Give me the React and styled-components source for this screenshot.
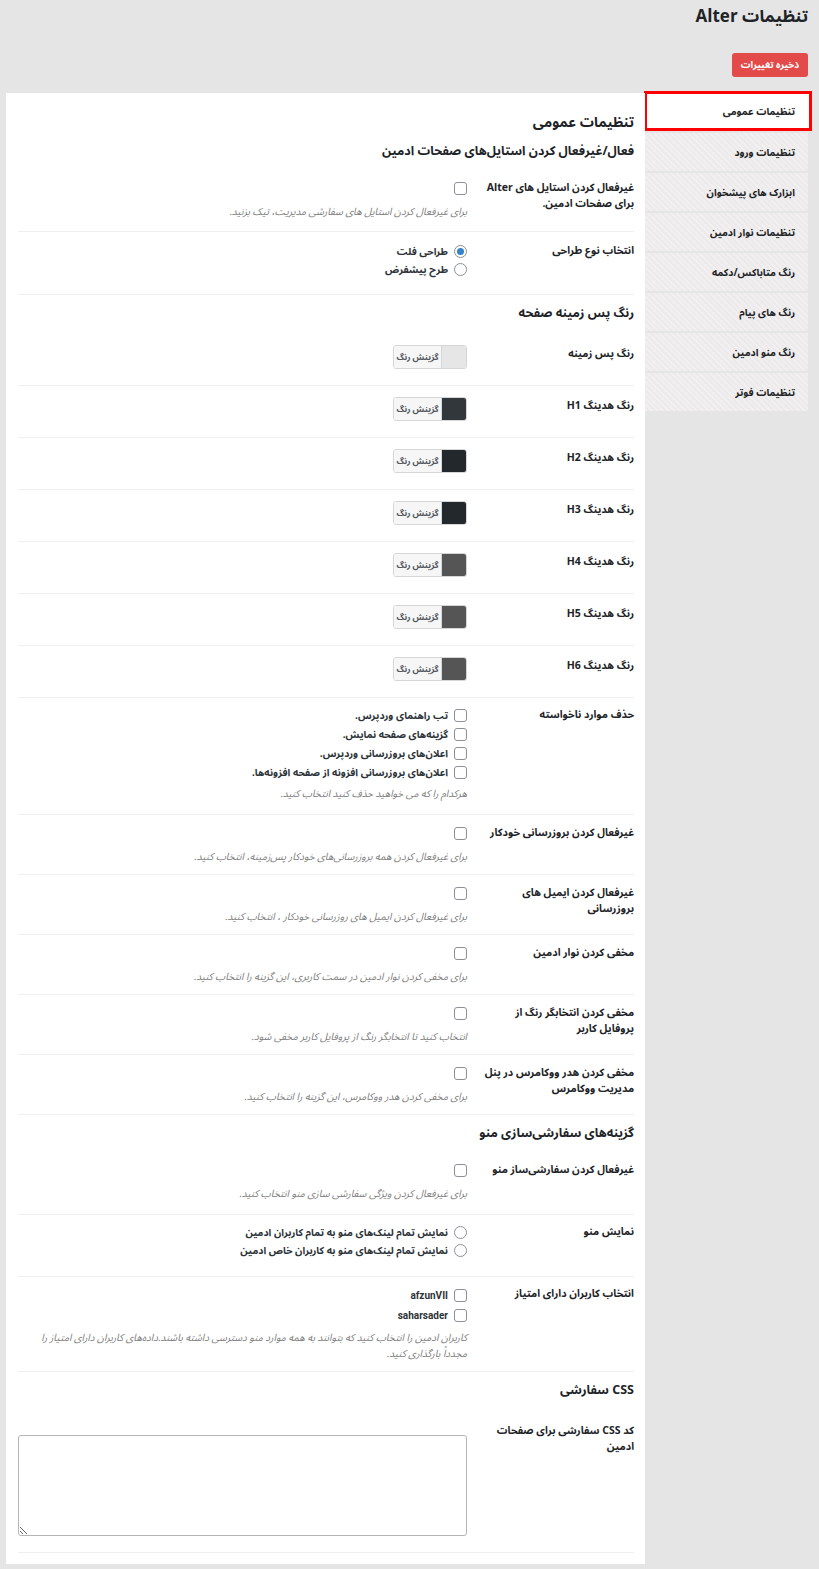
import styled, { createGlobalStyle } from "styled-components";

const GlobalStyle = createGlobalStyle`
  html, body {
    margin: 0;
    padding: 0;
    background: #e5e5e5;
  }
  body {
    font-family: "Noto Sans Arabic", "DejaVu Sans", "Noto Sans", sans-serif;
    color: #1d2327;
  }
`;

const Page = styled.div`
  direction: rtl;
  padding: 0 11px 6px 6px;
  min-height: 1569px;
  box-sizing: border-box;
`;

const PageTitle = styled.h1`
  margin: 0;
  padding: 6px 0 0;
  font-size: 17px;
  font-weight: 700;
  line-height: 22px;
  color: #1d2327;
`;

const Toolbar = styled.div`
  display: flex;
  padding: 25px 0 16px;
`;

const SaveButton = styled.button`
  font-family: inherit;
  background: #e34b4b;
  color: #fff;
  border: 0;
  border-radius: 3px;
  height: 24px;
  padding: 0 7px;
  font-size: 9.5px;
  font-weight: 700;
  white-space: nowrap;
  min-width: 76px;
`;

const Layout = styled.div`
  display: flex;
  align-items: flex-start;
`;

const Sidebar = styled.nav`
  width: 163px;
  flex-shrink: 0;
  display: flex;
  flex-direction: column;
  gap: 2px;
  margin-top: -2px;
`;

const TabItem = styled.div`
  height: 38px;
  display: flex;
  align-items: center;
  padding: 0 13px;
  font-size: 10px;
  font-weight: 700;
  color: #1d2327;
  box-sizing: border-box;
  white-space: nowrap;
  background: ${(p) =>
    p.$active
      ? "#fff"
      : "repeating-linear-gradient(45deg, #f1efef 0 2px, #eceaea 2px 4px)"};
  ${(p) =>
    p.$active &&
    `
    border: 3px solid #f00;
    margin: 0 -4px 0 -1px;
    height: 40px;
    padding-right: 14px;
  `}
`;

const Panel = styled.main`
  flex: 1;
  background: #fff;
  padding: 19px 11px 11px 12px;
`;

const PanelTitle = styled.h2`
  margin: 0;
  font-size: 14px;
  font-weight: 700;
  line-height: 22px;
`;

const SubTitle = styled.h3`
  margin: 7px 0 0;
  font-size: 12.5px;
  font-weight: 700;
  line-height: 20px;
`;

const SectionTitle = styled.h3`
  margin: 0;
  padding: 8px 0 12px;
  font-size: 12.5px;
  font-weight: 700;
  line-height: 20px;
`;

const Row = styled.div`
  display: grid;
  grid-template-columns: 148px 1fr;
  column-gap: 19px;
  padding: ${(p) => p.$pad || "9px 0 9px"};
  border-bottom: 1px solid #efefef;
  ${(p) => p.$first && "margin-top: 9px;"}
`;

const Label = styled.div`
  font-size: 10.5px;
  font-weight: 700;
  line-height: 16px;
  padding-top: 1px;
  white-space: nowrap;
`;

const Field = styled.div`
  display: flex;
  flex-direction: column;
  align-items: flex-start;
  min-width: 0;
`;

const Option = styled.label`
  display: flex;
  align-items: center;
  gap: 6px;
  height: ${(p) => p.$h || 18}px;
  font-size: 10px;
  font-weight: 700;
  color: #2c3338;
  font-family: ${(p) =>
    p.$latin ? '"Roboto", "DejaVu Sans", sans-serif' : "inherit"};
`;

const Box = styled.span`
  width: 11px;
  height: 11px;
  border: 1px solid #8c8f94;
  border-radius: 3px;
  background: #fff;
  flex-shrink: 0;
`;

const Radio = styled.span`
  width: 11px;
  height: 11px;
  border: 1px solid #8c8f94;
  border-radius: 50%;
  background: #fff;
  flex-shrink: 0;
  display: flex;
  align-items: center;
  justify-content: center;

  &::after {
    content: "";
    width: 7px;
    height: 7px;
    border-radius: 50%;
    background: ${(p) => (p.$checked ? "#3582c4" : "transparent")};
  }
`;

const Hint = styled.p`
  margin: ${(p) => p.$gap || 7}px 0 0;
  font-size: 10px;
  font-style: italic;
  line-height: 16px;
  color: #7d7d7d;
`;

const Picker = styled.div`
  display: flex;
  height: 24px;
  border: 1px solid #d6d6d6;
  border-radius: 3px;
  overflow: hidden;
  box-sizing: border-box;
  width: 74px;
`;

const Swatch = styled.span`
  width: 24px;
  background: ${(p) => p.$color};
`;

const PickerText = styled.span`
  flex: 1;
  background: #f7f6f6;
  border-right: 1px solid #d6d6d6;
  font-size: 8.5px;
  font-weight: 700;
  color: #50575e;
  display: flex;
  align-items: center;
  justify-content: center;
`;

const CodeArea = styled.textarea`
  width: 100%;
  height: 101px;
  box-sizing: border-box;
  border: 1px solid #b5b5b5;
  border-radius: 3px;
  margin-top: 13px;
  resize: vertical;
`;

const tabs = [
  "تنظیمات عمومی",
  "تنظیمات ورود",
  "ابزارک های پیشخوان",
  "تنظیمات نوار ادمین",
  "رنگ متاباکس/دکمه",
  "رنگ های پیام",
  "رنگ منو ادمین",
  "تنظیمات فوتر",
];

const colors = [
  ["رنگ پس زمینه", "#e6e6e6"],
  ["رنگ هدینگ H1", "#32373c"],
  ["رنگ هدینگ H2", "#23282d"],
  ["رنگ هدینگ H3", "#23282d"],
  ["رنگ هدینگ H4", "#555555"],
  ["رنگ هدینگ H5", "#555555"],
  ["رنگ هدینگ H6", "#555555"],
];

const removals = [
  "تب راهنمای وردپرس.",
  "گزینه‌های صفحه نمایش.",
  "اعلان‌های بروزرسانی وردپرس.",
  "اعلان‌های بروزرسانی افزونه از صفحه افزونه‌ها.",
];

const toggles = [
  [
    "غیرفعال کردن بروزرسانی خودکار",
    "برای غیرفعال کردن همه بروزرسانی‌های خودکار پس‌زمینه، انتخاب کنید.",
  ],
  [
    <>
      غیرفعال کردن ایمیل های
      <br />
      بروزرسانی
    </>,
    "برای غیرفعال کردن ایمیل های روزرسانی خودکار ، انتخاب کنید.",
  ],
  [
    "مخفی کردن نوار ادمین",
    "برای مخفی کردن نوار ادمین در سمت کاربری، این گزینه را انتخاب کنید.",
  ],
  [
    <>
      مخفی کردن انتخابگر رنگ از
      <br />
      پروفایل کاربر
    </>,
    "انتخاب کنید تا انتخابگر رنگ از پروفایل کاربر مخفی شود.",
  ],
  [
    <>
      مخفی کردن هدر ووکامرس در پنل
      <br />
      مدیریت ووکامرس
    </>,
    "برای مخفی کردن هدر ووکامرس، این گزینه را انتخاب کنید.",
  ],
];

function CheckRow({ label, hint, first, pad }) {
  return (
    <Row $first={first} $pad={pad}>
      <Label>{label}</Label>
      <Field>
        <Option>
          <Box />
        </Option>
        <Hint>{hint}</Hint>
      </Field>
    </Row>
  );
}

export default function App() {
  return (
    <Page>
      <GlobalStyle />
      <PageTitle>تنظیمات Alter</PageTitle>
      <Toolbar>
        <SaveButton>ذخیره تغییرات</SaveButton>
      </Toolbar>
      <Layout>
        <Sidebar>
          {tabs.map((t, i) => (
            <TabItem key={t} $active={i === 0}>
              {t}
            </TabItem>
          ))}
        </Sidebar>
        <Panel>
          <PanelTitle>تنظیمات عمومی</PanelTitle>
          <SubTitle>فعال/غیرفعال کردن استایل‌های صفحات ادمین</SubTitle>

          <CheckRow
            first
            pad="9px 0 11px"
            label={
              <>
                غیرفعال کردن استایل های Alter
                <br />
                برای صفحات ادمین.
              </>
            }
            hint="برای غیرفعال کردن استایل های سفارشی مدیریت، تیک بزنید."
          />

          <Row $pad="10px 0 16px">
            <Label>انتخاب نوع طراحی</Label>
            <Field>
              <Option>
                <Radio $checked />
                طراحی فلت
              </Option>
              <Option>
                <Radio />
                طرح پیشفرض
              </Option>
            </Field>
          </Row>

          <SectionTitle>رنگ پس زمینه صفحه</SectionTitle>
          {colors.map(([label, color], i) => (
            <Row key={label} $pad={i === 0 ? "10px 0 16px" : "11px 0 16px"}>
              <Label>{label}</Label>
              <Field>
                <Picker>
                  <Swatch $color={color} />
                  <PickerText>گزینش رنگ</PickerText>
                </Picker>
              </Field>
            </Row>
          ))}

          <Row $pad="8px 0 12px">
            <Label>حذف موارد ناخواسته</Label>
            <Field>
              {removals.map((r) => (
                <Option key={r} $h={19}>
                  <Box />
                  {r}
                </Option>
              ))}
              <Hint $gap={4}>هرکدام را که می خواهید حذف کنید انتخاب کنید.</Hint>
            </Field>
          </Row>

          {toggles.map(([label, hint], i) => (
            <CheckRow key={i} label={label} hint={hint} />
          ))}

          <SectionTitle>گزینه‌های سفارشی‌سازی منو</SectionTitle>
          <CheckRow
            pad="6px 0 12px"
            label="غیرفعال کردن سفارشی‌ساز منو"
            hint="برای غیرفعال کردن ویژگی سفارشی سازی منو انتخاب کنید."
          />

          <Row $pad="8px 0 17px">
            <Label>نمایش منو</Label>
            <Field>
              <Option>
                <Radio />
                نمایش تمام لینک‌های منو به تمام کاربران ادمین
              </Option>
              <Option>
                <Radio />
                نمایش تمام لینک‌های منو به کاربران خاص ادمین
              </Option>
            </Field>
          </Row>

          <Row $pad="8px 0 9px">
            <Label>انتخاب کاربران دارای امتیاز</Label>
            <Field>
              <Option $h={20} $latin>
                <Box />
                afzunVII
              </Option>
              <Option $h={20} $latin>
                <Box />
                saharsader
              </Option>
              <Hint $gap={5}>
                کاربران ادمین را انتخاب کنید که بتوانند به همه موارد منو دسترسی
                داشته باشند.داده‌های کاربران دارای امتیاز را مجدداً بارگذاری
                کنید.
              </Hint>
            </Field>
          </Row>

          <SectionTitle>CSS سفارشی</SectionTitle>
          <Row $pad="10px 0 16px">
            <Label>
              کد CSS سفارشی برای صفحات
              <br />
              ادمین
            </Label>
            <Field>
              <CodeArea />
            </Field>
          </Row>
        </Panel>
      </Layout>
    </Page>
  );
}
